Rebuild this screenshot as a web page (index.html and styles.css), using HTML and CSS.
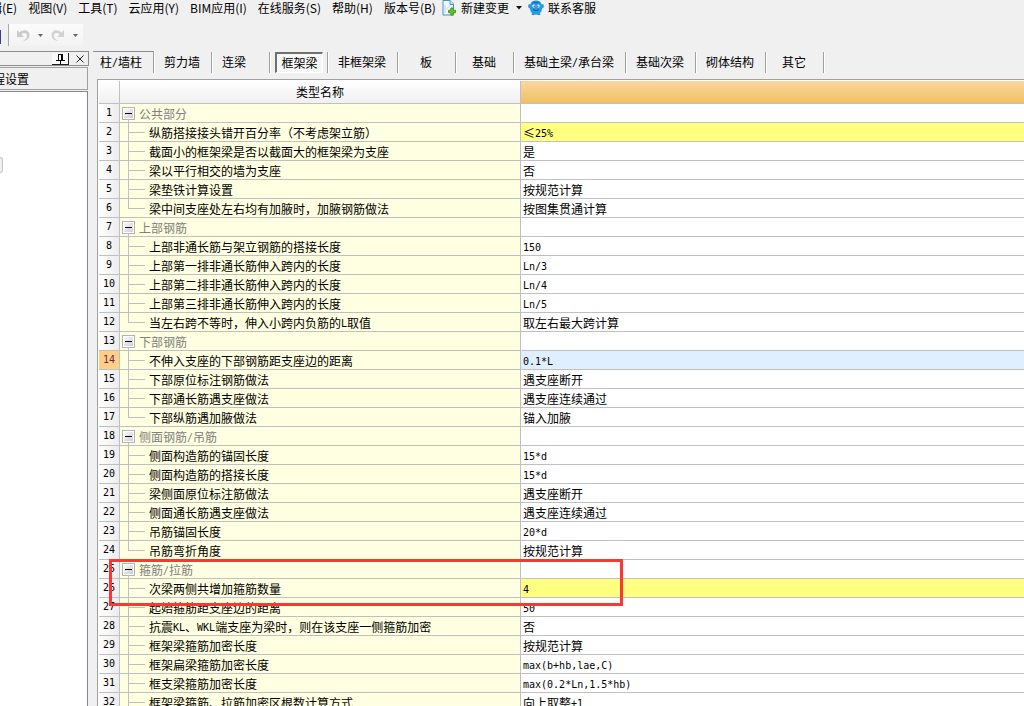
FILE: index.html
```html
<!DOCTYPE html>
<html lang="zh-CN">
<head>
<meta charset="utf-8">
<title>计算设置</title>
<link rel="stylesheet" href="styles.css">
</head>
<body>
<nav class="menubar">
  <button class="menu">编辑(E)</button>
  <button class="menu">视图(V)</button>
  <button class="menu">工具(T)</button>
  <button class="menu">云应用(Y)</button>
  <button class="menu">BIM应用(I)</button>
  <button class="menu">在线服务(S)</button>
  <button class="menu">帮助(H)</button>
  <button class="menu">版本号(B)</button>
  <button class="menu with-icon">
    <svg width="15" height="16" viewBox="0 0 15 16"><path d="M1 .5h7l3.500 3.500v11H1z" fill="#f4faff" stroke="#4b8fc4"/><path d="M8 .5v4h3.500" fill="#cfe6f7" stroke="#4b8fc4"/><path d="M3 5v8M4 10l4-5" stroke="#d3e8f6" stroke-width="2"/><path d="M8.800 8h2.400v2.300h2.300v2.400h-2.300V15H8.800v-2.300H6.500v-2.400h2.300z" fill="#6cc52c" stroke="#3f9a24" stroke-linejoin="round"/></svg>
    <span>新建变更</span>
    <svg class="drop" width="6" height="4" viewBox="0 0 6 4"><path d="M0 0h6L3 3.500z" fill="#111"/></svg>
  </button>
  <button class="menu with-icon">
    <svg width="16" height="16" viewBox="0 0 16 16"><path d="M2.500 4C3.500 1 6 .5 8 .5S12.500 1 13.500 4l2 .5c.8 2 .2 3.500-1.500 4 0 3-1.500 4-2 4.500l.5 2H10l-2-.5-2 .5H3.500l.5-2C3 12 2 11 2 8.500.300 8-.3 6.500.5 4.500z" fill="#239be5"/><path d="M3.500 3.200C6 .8 10 .8 12.500 3.200z" fill="#1670b4"/><ellipse cx="5.800" cy="6" rx="1.500" ry="1.600" fill="#fff"/><ellipse cx="10.200" cy="6" rx="1.500" ry="1.600" fill="#fff"/><circle cx="6.200" cy="6.200" r=".7" fill="#123c66"/><circle cx="9.800" cy="6.200" r=".7" fill="#123c66"/><path d="M5 9.500q3 2.500 6 0" fill="none" stroke="#0b4f88"/></svg>
    <span>联系客服</span>
  </button>
</nav>
<div class="toolbar">
  <button class="save" aria-label="保存"></button>
  <div class="history">
    <button aria-label="撤销"><svg width="14" height="13" viewBox="0 0 14 13"><path d="M1 1v7h7L5.500 5.500C8 3 11 4 11 7c0 2-1.500 3.500-4 5 4-.5 6.500-2.500 6.500-6C13.500 1 7.500-.5 3.500 3.500z" fill="#cbcbcb"/></svg></button>
    <button class="caret" aria-label="撤销列表"><svg width="5" height="3" viewBox="0 0 5 3"><path d="M0 0h5L2.500 3z" fill="#666"/></svg></button>
    <button aria-label="恢复"><svg width="14" height="13" viewBox="0 0 14 13"><path d="M13 1v7H6l2.500-2.500C6 3 3 4 3 7c0 2 1.500 3.500 4 5C3 11.500.500 9.500.500 6 .5 1 6.500-.5 10.500 3.500z" fill="#d3d3d3"/></svg></button>
    <button class="caret" aria-label="恢复列表"><svg width="5" height="3" viewBox="0 0 5 3"><path d="M0 0h5L2.500 3z" fill="#666"/></svg></button>
  </div>
</div>
<div class="workspace">
  <aside class="dock">
    <div class="dock-title">
      <button class="pin" aria-label="固定"><svg width="9" height="10" viewBox="0 0 9 10"><path d="M2 .5h5M2.500 0v6M5.500 0v6M6.500 0v6M0 6.500h9M4.500 7v3" fill="none" stroke="#000"/></svg></button>
      <button class="close" aria-label="关闭"><svg width="8" height="8" viewBox="0 0 8 8"><path d="M.5.5l7 7M7.500.5l-7 7" stroke="#222"/></svg></button>
    </div>
    <button class="section">工程设置</button>
    <div class="dock-body"><div class="notch"></div></div>
  </aside>
  <main>
    <div class="tabs">
      <button class="tab first">柱<span class="m">/</span>墙柱</button>
      <button class="tab">剪力墙</button>
      <button class="tab start">连梁</button>
      <button class="tab active"><span>框架梁</span></button>
      <button class="tab">非框架梁</button>
      <button class="tab">板</button>
      <button class="tab">基础</button>
      <button class="tab">基础主梁<span class="m">/</span>承台梁</button>
      <button class="tab">基础次梁</button>
      <button class="tab">砌体结构</button>
      <button class="tab">其它</button>
    </div>
    <div class="grid">
      <table>
        <colgroup><col class="c-num"><col class="c-name"><col></colgroup>
        <thead><tr><th></th><th>类型名称</th><th class="picked"></th></tr></thead>
        <tbody>
          <tr class="group"><th>1</th><td><button aria-label="折叠"></button>公共部分</td><td></td></tr>
          <tr class="marked"><th>2</th><td>纵筋搭接接头错开百分率（不考虑架立筋）</td><td>≤<span class="m">25%</span></td></tr>
          <tr><th>3</th><td>截面小的框架梁是否以截面大的框架梁为支座</td><td>是</td></tr>
          <tr><th>4</th><td>梁以平行相交的墙为支座</td><td>否</td></tr>
          <tr><th>5</th><td>梁垫铁计算设置</td><td>按规范计算</td></tr>
          <tr class="last"><th>6</th><td>梁中间支座处左右均有加腋时，加腋钢筋做法</td><td>按图集贯通计算</td></tr>
          <tr class="group"><th>7</th><td><button aria-label="折叠"></button>上部钢筋</td><td></td></tr>
          <tr><th>8</th><td>上部非通长筋与架立钢筋的搭接长度</td><td><span class="m">150</span></td></tr>
          <tr><th>9</th><td>上部第一排非通长筋伸入跨内的长度</td><td><span class="m">Ln/3</span></td></tr>
          <tr><th>10</th><td>上部第二排非通长筋伸入跨内的长度</td><td><span class="m">Ln/4</span></td></tr>
          <tr><th>11</th><td>上部第三排非通长筋伸入跨内的长度</td><td><span class="m">Ln/5</span></td></tr>
          <tr class="last"><th>12</th><td>当左右跨不等时，伸入小跨内负筋的<span class="m">L</span>取值</td><td>取左右最大跨计算</td></tr>
          <tr class="group"><th>13</th><td><button aria-label="折叠"></button>下部钢筋</td><td></td></tr>
          <tr class="current"><th>14</th><td>不伸入支座的下部钢筋距支座边的距离</td><td><span class="m">0.1*L</span></td></tr>
          <tr><th>15</th><td>下部原位标注钢筋做法</td><td>遇支座断开</td></tr>
          <tr><th>16</th><td>下部通长筋遇支座做法</td><td>遇支座连续通过</td></tr>
          <tr class="last"><th>17</th><td>下部纵筋遇加腋做法</td><td>锚入加腋</td></tr>
          <tr class="group"><th>18</th><td><button aria-label="折叠"></button>侧面钢筋<span class="m">/</span>吊筋</td><td></td></tr>
          <tr><th>19</th><td>侧面构造筋的锚固长度</td><td><span class="m">15*d</span></td></tr>
          <tr><th>20</th><td>侧面构造筋的搭接长度</td><td><span class="m">15*d</span></td></tr>
          <tr><th>21</th><td>梁侧面原位标注筋做法</td><td>遇支座断开</td></tr>
          <tr><th>22</th><td>侧面通长筋遇支座做法</td><td>遇支座连续通过</td></tr>
          <tr><th>23</th><td>吊筋锚固长度</td><td><span class="m">20*d</span></td></tr>
          <tr class="last"><th>24</th><td>吊筋弯折角度</td><td>按规范计算</td></tr>
          <tr class="group"><th>25</th><td><button aria-label="折叠"></button>箍筋<span class="m">/</span>拉筋</td><td></td></tr>
          <tr class="marked"><th>26</th><td>次梁两侧共增加箍筋数量</td><td><span class="m">4</span></td></tr>
          <tr><th>27</th><td>起始箍筋距支座边的距离</td><td><span class="m">50</span></td></tr>
          <tr><th>28</th><td>抗震<span class="m">KL</span>、<span class="m">WKL</span>端支座为梁时，则在该支座一侧箍筋加密</td><td>否</td></tr>
          <tr><th>29</th><td>框架梁箍筋加密长度</td><td>按规范计算</td></tr>
          <tr><th>30</th><td>框架扁梁箍筋加密长度</td><td><span class="m">max(b+hb,lae,C)</span></td></tr>
          <tr><th>31</th><td>框支梁箍筋加密长度</td><td><span class="m">max(0.2*Ln,1.5*hb)</span></td></tr>
          <tr><th>32</th><td>框架梁箍筋、拉筋加密区根数计算方式</td><td>向上取整<span class="m">+1</span></td></tr>
        </tbody>
      </table>
      <div class="callout"></div>
    </div>
  </main>
</div>
</body>
</html>
```
FILE: styles.css
```css
* { box-sizing: border-box; }
body {
  margin: 0;
  height: 100vh;
  overflow: hidden;
  display: flex;
  flex-direction: column;
  background: #f0f0f0;
  color: #000;
  font: 12px/16px "Noto Sans CJK SC", sans-serif;
}
button {
  margin: 0;
  padding: 0;
  border: 0;
  background: none;
  color: inherit;
  font: inherit;
  white-space: nowrap;
}
svg { display: block; flex: none; }
.m { font: 10px/12px "DejaVu Sans Mono", monospace; vertical-align: 1px; }

/* menu bar */
.menubar {
  flex: none;
  display: flex;
  gap: 11px;
  height: 24px;
  margin-left: -22px;
  align-items: flex-start;
}
.with-icon { display: flex; align-items: center; gap: 4px; margin-left: -5px; }
.drop { margin-left: 3px; }

/* toolbar */
.toolbar { flex: none; display: flex; height: 27px; align-items: flex-start; }
.save { width: 1px; height: 14px; margin-top: 6px; background: #3a3a9a; }
.history {
  display: flex;
  align-items: center;
  gap: 8px;
  height: 22px;
  margin-left: 7px;
  padding: 0 5px 0 7px;
  border-left: 1px solid #a8a8a8;
  background: linear-gradient(#fbfbfb, #f3f3f3);
}

/* dock */
.workspace { flex: 1; min-height: 0; display: flex; }
.dock { flex: none; width: 89px; display: flex; flex-direction: column; }
.dock-title {
  display: flex;
  justify-content: flex-end;
  align-items: center;
  gap: 7px;
  height: 15px;
  padding: 1px 4px 0 0;
  border: 1px solid #8c8c8c;
  border-left: 0;
}
.pin {
  display: flex;
  justify-content: center;
  align-items: center;
  width: 17px;
  height: 12px;
  background: #fafafa;
  border-right: 1px solid #222;
  border-bottom: 1px solid #222;
}
.section {
  height: 23px;
  margin: 1px 1px 1px 0;
  padding: 1px 58px 0 0;
  display: flex;
  align-items: center;
  justify-content: flex-end;
  overflow: hidden;
  border: 1px solid #a0a0a0;
  border-left: 0;
}
.dock-body {
  flex: 1;
  margin-right: 1px;
  padding-top: 65px;
  background: #fff;
  border-top: 1px solid #828790;
  border-right: 1px solid #828790;
}
.notch {
  width: 3px;
  height: 16px;
  background: #f0f0f0;
  border: 1px solid #c4c4c4;
  border-left: 0;
  border-radius: 0 3px 3px 0;
}

/* tabs */
main { flex: 1; min-width: 0; margin-left: 4px; display: flex; flex-direction: column; }
.tabs { flex: none; display: flex; height: 28px; align-items: flex-start; }
.tab {
  flex: none;
  min-width: 58px;
  height: 21px;
  margin-top: 1px;
  padding: 0 11px 2px 10px;
  border-right: 1px solid #a0a0a0;
  box-shadow: 1px 0 #fff;
}
.tab.first {
  width: 61px;
  height: 22px;
  margin-top: 0;
  padding: 0 10px 2px 7px;
  border-top: 1px solid #8a8a98;
  text-align: left;
}
.tab.start { text-align: left; }
.tab.active { padding: 0 4px 0 5px; }
.tab.active span {
  display: block;
  height: 21px;
  line-height: 18px;
  border: 1px solid #fff;
  border-top: 2px solid #707070;
  border-left: 2px solid #707070;
  background: repeating-conic-gradient(#fff 0 25%, #f0f0f0 0 50%) 0 0 / 2px 2px;
}

/* settings grid */
.grid {
  position: relative;
  flex: 1;
  min-height: 0;
  margin-left: 4px;
  padding: 1px 0 0 1px;
  overflow: hidden;
  border-top: 1px solid #a0a0a0;
  border-left: 1px solid #a0a0a0;
  background: #fff;
}
table { width: 100%; table-layout: fixed; border-collapse: separate; border-spacing: 0; }
.c-num { width: 21px; }
.c-name { width: 401px; }
th, td {
  height: 19px;
  padding: 0;
  border-right: 1px solid #c0c0c0;
  border-bottom: 1px solid #c0c0c0;
  line-height: 16px;
  font-weight: normal;
  white-space: nowrap;
  text-align: left;
}
thead th {
  height: 23px;
  text-align: center;
  background: linear-gradient(#fff, #f0f0f0);
}
thead .picked { border-right: 0; background: linear-gradient(#fad7a0, #f0c060); }
tbody th {
  text-align: center;
  font: 10px/16px "DejaVu Sans Mono", monospace;
  background: linear-gradient(90deg, #fff, #ececec);
}
td:nth-child(2) {
  padding: 2px 0 0 29px;
  background:
    linear-gradient(#c0c0c0, #c0c0c0) 8px 0 / 1px 100% no-repeat,
    linear-gradient(#c0c0c0, #c0c0c0) 8px 9px / 17px 1px no-repeat,
    #ffffe1;
}
.last td:nth-child(2) { background-size: 1px 10px, 17px 1px, auto; }
.group td:nth-child(2) {
  padding-left: 2px;
  color: #808080;
  background: linear-gradient(#c0c0c0, #c0c0c0) 8px 15px / 1px 3px no-repeat, #ffffe1;
}
.group button {
  width: 13px;
  height: 13px;
  margin: 1px 4px 0 0;
  vertical-align: top;
  border: 1px solid #b4b4b4;
  outline: 1px solid #fff;
  outline-offset: -2px;
  background:
    linear-gradient(#000, #000) center / 7px 1px no-repeat,
    linear-gradient(135deg, #fff, #c8c8d0);
}
td:nth-child(3) { padding: 1px 0 0 2px; border-right: 0; background: #fff; }
.marked td:nth-child(3) { background: #ffff80; }
.current td:nth-child(3) { background: #e0efff; }
.current th { background: #ffd083; color: #702060; }

.callout {
  position: absolute;
  left: 11px;
  top: 479px;
  width: 514px;
  height: 47px;
  border: 3px solid #ff3535;
}
```
